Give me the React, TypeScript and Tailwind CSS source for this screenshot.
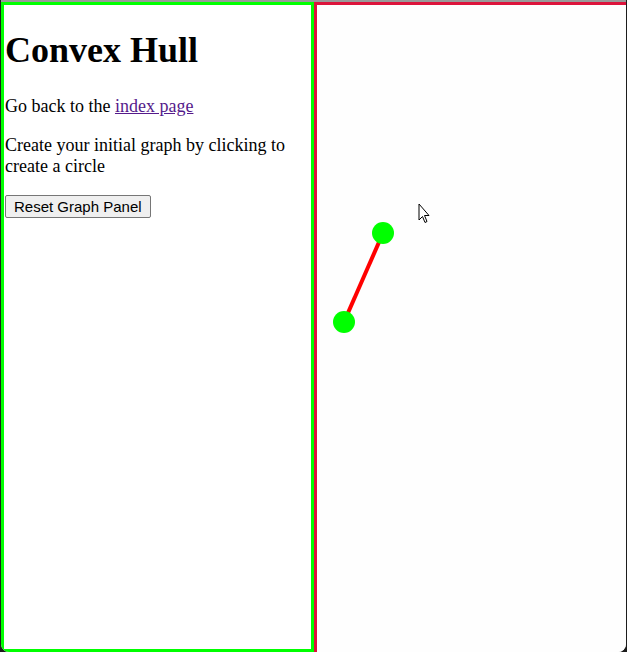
export default function App() {
  return (
    <div className="h-[652px] w-[627px] bg-[#1c1c1c] pl-px pr-px">
      <div className="flex h-full overflow-hidden rounded-b-[8px] border-t-2 border-[#9a9a9a] bg-white">
        <div className="h-full w-[313px] shrink-0 border-[3px] border-[#00ff00] px-[1px] font-['Liberation_Serif',serif] text-[18px] text-black">
          <h1 className="mt-[25px] mb-[25px] text-[36px] font-bold leading-[41px]">Convex Hull</h1>
          <p className="my-[18px] leading-[21px]">
            Go back to the{" "}
            <a href="#" className="text-[#551a8b] underline">
              index page
            </a>
          </p>
          <p className="mt-[18px] mb-[16px] leading-[21px]">Create your initial graph by clicking to create a circle</p>
          <button className="rounded-[2px] border border-[#767676] bg-[#efefef] px-[8px] py-[2px] font-['Liberation_Sans',sans-serif] text-[15px] leading-[17px] text-black">
            Reset Graph Panel
          </button>
        </div>
        <div className="relative h-full flex-1 border-l-[3px] border-t-[3px] border-[#dc143c] bg-[#fefefe]">
          <svg className="absolute inset-0" width="310" height="650">
            <line x1="66" y1="228" x2="27" y2="317" stroke="#ff0000" strokeWidth="4" />
            <circle cx="66" cy="228" r="11" fill="#00ff00" />
            <circle cx="27" cy="317" r="11" fill="#00ff00" />
            <path
              d="M102 199 L102 215 L105.5 211.5 L108 217.5 L110 216.5 L107.5 210.5 L112 210.5 Z"
              fill="#fff"
              stroke="#000"
              strokeWidth="1"
              strokeLinejoin="round"
            />
          </svg>
        </div>
      </div>
    </div>
  );
}
